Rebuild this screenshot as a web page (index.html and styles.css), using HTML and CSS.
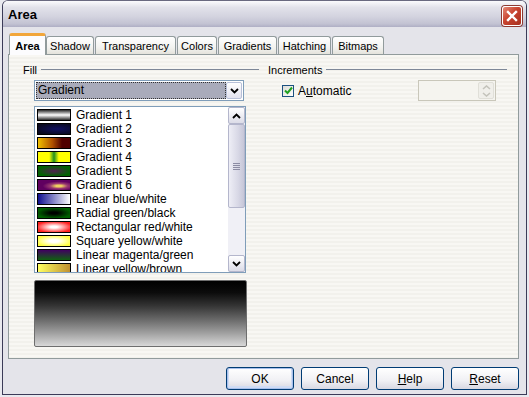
FILE: index.html
```html
<!DOCTYPE html>
<html lang="en">
<head>
  <meta charset="UTF-8" />
  <title>Area</title>
  <link rel="stylesheet" href="styles.css">
</head>
<body>

<div class="dialog">
  <!-- Title bar -->
  <div class="titlebar">
    <span class="title">Area</span>
    <span class="close-btn">
      <svg width="12" height="12" viewBox="0 0 12 12"><path d="M2 2 L10 10 M10 2 L2 10" stroke="#fff" stroke-width="2.4" stroke-linecap="square"/></svg>
    </span>
  </div>

  <div class="body">
    <!-- Tabs -->
    <div class="tabs">
      <div class="tab active w-area">Area</div>
      <div class="tab w-shadow">Shadow</div>
      <div class="tab w-transp">Transparency</div>
      <div class="tab w-colors">Colors</div>
      <div class="tab w-grad">Gradients</div>
      <div class="tab w-hatch">Hatching</div>
      <div class="tab w-bitmaps">Bitmaps</div>
    </div>

    <!-- Tab page -->
    <div class="panel">
      <!-- Fill column -->
      <div class="col">
        <div class="group-label"><span>Fill</span></div>

        <div class="dropdown">
          <span class="dropdown-value">Gradient</span>
          <span class="drop-btn">
            <svg width="9" height="6" viewBox="0 0 9 6"><polyline points="1,1 4.5,4.5 8,1" fill="none" stroke="#000" stroke-width="1.8"/></svg>
          </span>
        </div>

        <div class="listbox">
          <ul class="items">
            <li><span class="swatch g1"></span>Gradient 1</li>
            <li><span class="swatch g2"></span>Gradient 2</li>
            <li><span class="swatch g3"></span>Gradient 3</li>
            <li><span class="swatch g4"></span>Gradient 4</li>
            <li><span class="swatch g5"></span>Gradient 5</li>
            <li><span class="swatch g6"></span>Gradient 6</li>
            <li><span class="swatch g7"></span>Linear blue/white</li>
            <li><span class="swatch g8"></span>Radial green/black</li>
            <li><span class="swatch g9"></span>Rectangular red/white</li>
            <li><span class="swatch g10"></span>Square yellow/white</li>
            <li><span class="swatch g11"></span>Linear magenta/green</li>
            <li><span class="swatch g12"></span>Linear yellow/brown</li>
          </ul>
          <div class="scrollbar">
            <span class="sb-btn">
              <svg width="9" height="6" viewBox="0 0 9 6"><polyline points="1,5 4.5,1.5 8,5" fill="none" stroke="#000" stroke-width="1.8"/></svg>
            </span>
            <div class="sb-track">
              <div class="sb-thumb"><span class="grip"></span></div>
            </div>
            <span class="sb-btn">
              <svg width="9" height="6" viewBox="0 0 9 6"><polyline points="1,1 4.5,4.5 8,1" fill="none" stroke="#000" stroke-width="1.8"/></svg>
            </span>
          </div>
        </div>

        <div class="preview"></div>
      </div>

      <!-- Increments column -->
      <div class="col">
        <div class="group-label"><span>Increments</span></div>
        <div class="incr-row">
          <label class="check">
            <span class="box">
              <svg width="9" height="9" viewBox="0 0 9 9"><polyline points="1,4.5 3.5,7 8,1.5" fill="none" stroke="#21a121" stroke-width="2"/></svg>
            </span>
            <span>A<u>u</u>tomatic</span>
          </label>
          <div class="spin">
            <span class="spin-btns">
              <svg width="9" height="5" viewBox="0 0 9 5"><polyline points="1,4 4.5,1 8,4" fill="none" stroke="#c4c3bb" stroke-width="1.6"/></svg>
              <svg width="9" height="5" viewBox="0 0 9 5"><polyline points="1,1 4.5,4 8,1" fill="none" stroke="#c4c3bb" stroke-width="1.6"/></svg>
            </span>
          </div>
        </div>
      </div>
    </div>

    <!-- Dialog buttons -->
    <div class="buttons">
      <button class="default">OK</button>
      <button>Cancel</button>
      <button><u>H</u>elp</button>
      <button><u>R</u>eset</button>
    </div>
  </div>
</div>

</body>
</html>
```

FILE: styles.css
```css
body {
  margin: 0;
  background-color: #e9e9ef;
  font-family: 'Liberation Sans', Arial, sans-serif;
  font-size: 11px;
  color: #000;
}

/* ============ Window frame ============ */
.dialog {
  width: 525px;
  height: 395px;
  margin-left: 2px;
  border: 1px solid #3b3b58;
  border-top-color: #6a6a80;
  border-radius: 6px 6px 0 0;
  background-color: #e4e4ea;
  box-sizing: border-box;
  overflow: hidden;
}

.titlebar {
  height: 26px;
  display: flex;
  align-items: center;
  justify-content: space-between;
  padding: 0 4px 0 5px;
  background: linear-gradient(#fbfbfd 0%, #e2e2ea 25%, #d3d3df 60%, #c2c2d2 88%, #aeaec4 100%);
}

.title {
  font-weight: bold;
  font-size: 13px;
  margin-top: 1px;
}

.close-btn {
  width: 20px;
  height: 20px;
  margin-top: 4px;
  box-sizing: border-box;
  border: 1px solid #fff;
  border-radius: 3px;
  background: linear-gradient(135deg, #e58a78, #c8432f 45%, #a8301f);
  box-shadow: 0 0 0 1px #8e3a32;
  display: flex;
  align-items: center;
  justify-content: center;
}

.body {
  padding: 6px 7px 0 5px;
}

/* ============ Tabs ============ */
.tabs {
  display: flex;
  align-items: flex-end;
  height: 21px;
  padding-left: 1px;
  position: relative;
  z-index: 1;
}

.tab {
  height: 18px;
  box-sizing: border-box;
  border: 1px solid #919b9c;
  border-bottom: none;
  border-radius: 3px 3px 0 0;
  background: linear-gradient(#ffffff, #f3f3f0 60%, #e4e3dc);
  display: flex;
  align-items: center;
  justify-content: center;
  margin-right: 1px;
  padding-top: 1px;
}

.tab.active {
  height: 22px;
  margin-bottom: -1px;
  margin-right: 0;
  font-weight: bold;
  background: #fcfcfe;
  border-top: 3px solid #f2a63a;
  padding-top: 0;
}

.w-area { width: 37px; }
.w-shadow { width: 48px; }
.w-transp { width: 81px; }
.w-colors { width: 40px; }
.w-grad { width: 59px; }
.w-hatch { width: 53px; }
.w-bitmaps { width: 52px; }

/* ============ Tab page ============ */
.panel {
  height: 305px;
  width: 511px;
  box-sizing: border-box;
  border: 1px solid #919b9c;
  background: repeating-linear-gradient(#f8f7f3 0 2px, #f2f1ec 2px 4px);
  display: grid;
  grid-template-columns: 236px 1fr;
  column-gap: 9px;
  padding: 8px 11px 0 14px;
}

.group-label {
  display: flex;
  align-items: center;
  height: 13px;
}

.group-label span {
  padding-right: 4px;
}

.group-label::after {
  content: '';
  flex: 1;
  height: 1px;
  background-color: #7e8898;
}

/* Dropdown */
.dropdown {
  margin: 4px 0 0 11px;
  width: 210px;
  height: 21px;
  box-sizing: border-box;
  border: 1px solid #7f9db9;
  background-color: #fff;
  display: flex;
  align-items: center;
  padding: 1px;
}

.dropdown-value {
  flex: 1;
  height: 17px;
  line-height: 15px;
  box-sizing: border-box;
  border: 1px dotted #333;
  background-color: #a9abba;
  padding-left: 1px;
  font-size: 12px;
}

.drop-btn {
  width: 16px;
  height: 17px;
  box-sizing: border-box;
  border: 1px solid #b8c0d8;
  border-radius: 2px;
  background: linear-gradient(#ffffff, #e2e2ee);
  display: flex;
  align-items: center;
  justify-content: center;
}

/* List box */
.listbox {
  margin: 5px 0 0 11px;
  width: 212px;
  height: 167px;
  box-sizing: border-box;
  border: 1px solid #7f9db9;
  background-color: #fff;
  display: flex;
  overflow: hidden;
}

.items {
  list-style: none;
  margin: 0;
  padding: 1px 0 0 2px;
  flex: 1;
  overflow: hidden;
}

.items li {
  height: 14px;
  display: flex;
  align-items: center;
  gap: 5px;
  font-size: 12px;
  white-space: nowrap;
}

.swatch {
  width: 34px;
  height: 12px;
  box-sizing: border-box;
  border: 1px solid #000;
  flex-shrink: 0;
}

.g1 { background: linear-gradient(#2a2a2a, #ffffff 50%, #2a2a2a); }
.g2 { background: radial-gradient(ellipse at 60% 50%, #101060, #0a0a20 80%); }
.g3 { background: linear-gradient(90deg, #f0c000, #b05000 45%, #500000 75%); }
.g4 { background: linear-gradient(90deg, #ffff00 35%, #209020 50%, #ffff00 65%); }
.g5 { background: radial-gradient(ellipse, #502050, #006400 75%); }
.g6 { background: radial-gradient(ellipse at 65% 60%, #f0d060 10%, #9a3a70 30%, #600060 55%); }
.g7 { background: linear-gradient(90deg, #101090, #ffffff); }
.g8 { background: radial-gradient(ellipse, #000 15%, #006000 75%); }
.g9 { background: radial-gradient(ellipse, #ffffff 15%, #ff2020 80%); }
.g10 { background: radial-gradient(ellipse, #ffffff 20%, #ffff40 80%); }
.g11 { background: linear-gradient(#400060, #106010); }
.g12 { background: linear-gradient(90deg, #ffff60, #c09030); }

/* Scrollbar */
.scrollbar {
  width: 17px;
  display: flex;
  flex-direction: column;
  background-color: #f0f0f6;
}

.sb-btn {
  height: 17px;
  box-sizing: border-box;
  border: 1px solid #b4b6cc;
  border-radius: 2px;
  background: linear-gradient(#ffffff, #dcdce8);
  display: flex;
  align-items: center;
  justify-content: center;
  flex-shrink: 0;
}

.sb-track {
  flex: 1;
}

.sb-thumb {
  height: 84px;
  box-sizing: border-box;
  border: 1px solid #b4b6cc;
  border-radius: 2px;
  background: linear-gradient(90deg, #eeeef6, #d8d8e6 60%, #c6c6d8);
  display: flex;
  align-items: center;
  justify-content: center;
}

.grip {
  width: 7px;
  height: 7px;
  background: repeating-linear-gradient(#8c8ca4 0 1px, transparent 1px 2px);
}

/* Preview */
.preview {
  margin: 7px 0 0 11px;
  width: 213px;
  height: 67px;
  box-sizing: border-box;
  border: 1px solid #6e6e6e;
  border-radius: 2px;
  background: linear-gradient(#000 0%, #0c0c0c 18%, #343434 38%, #666 58%, #a0a0a0 80%, #d8d8d8 100%);
}

/* Increments */
.incr-row {
  display: flex;
  align-items: center;
  margin-top: 4px;
  height: 21px;
}

.check {
  display: flex;
  align-items: center;
  gap: 4px;
  margin-left: 14px;
  width: 136px;
  font-size: 12px;
}

.box {
  width: 12px;
  height: 12px;
  box-sizing: border-box;
  border: 1px solid #1c5180;
  background: linear-gradient(135deg, #dcdcd6, #fff);
  display: flex;
  align-items: center;
  justify-content: center;
}

.spin {
  width: 78px;
  height: 21px;
  box-sizing: border-box;
  border: 1px solid #c9c7ba;
  background-color: #f5f4ef;
  display: flex;
  justify-content: flex-end;
  align-items: center;
  padding-right: 1px;
}

.spin-btns {
  width: 16px;
  height: 17px;
  box-sizing: border-box;
  border: 1px solid #e0dfd8;
  border-radius: 2px;
  background-color: #f0efea;
  display: flex;
  flex-direction: column;
  align-items: center;
  justify-content: center;
  gap: 2px;
}

/* ============ Buttons ============ */
.buttons {
  display: flex;
  justify-content: flex-end;
  gap: 7px;
  margin-top: 8px;
}

button {
  width: 68px;
  height: 23px;
  border: 1px solid #003c74;
  border-radius: 3px;
  background: linear-gradient(#ffffff, #f0f0f4 60%, #d8d8e2);
  font-family: 'Liberation Sans', Arial, sans-serif;
  font-size: 12px;
  color: #000;
  padding: 0;
}

button.default {
  box-shadow: inset 0 0 0 1px #a8c0ec, inset 0 -1px 0 2px #d0dcf4;
}
```
